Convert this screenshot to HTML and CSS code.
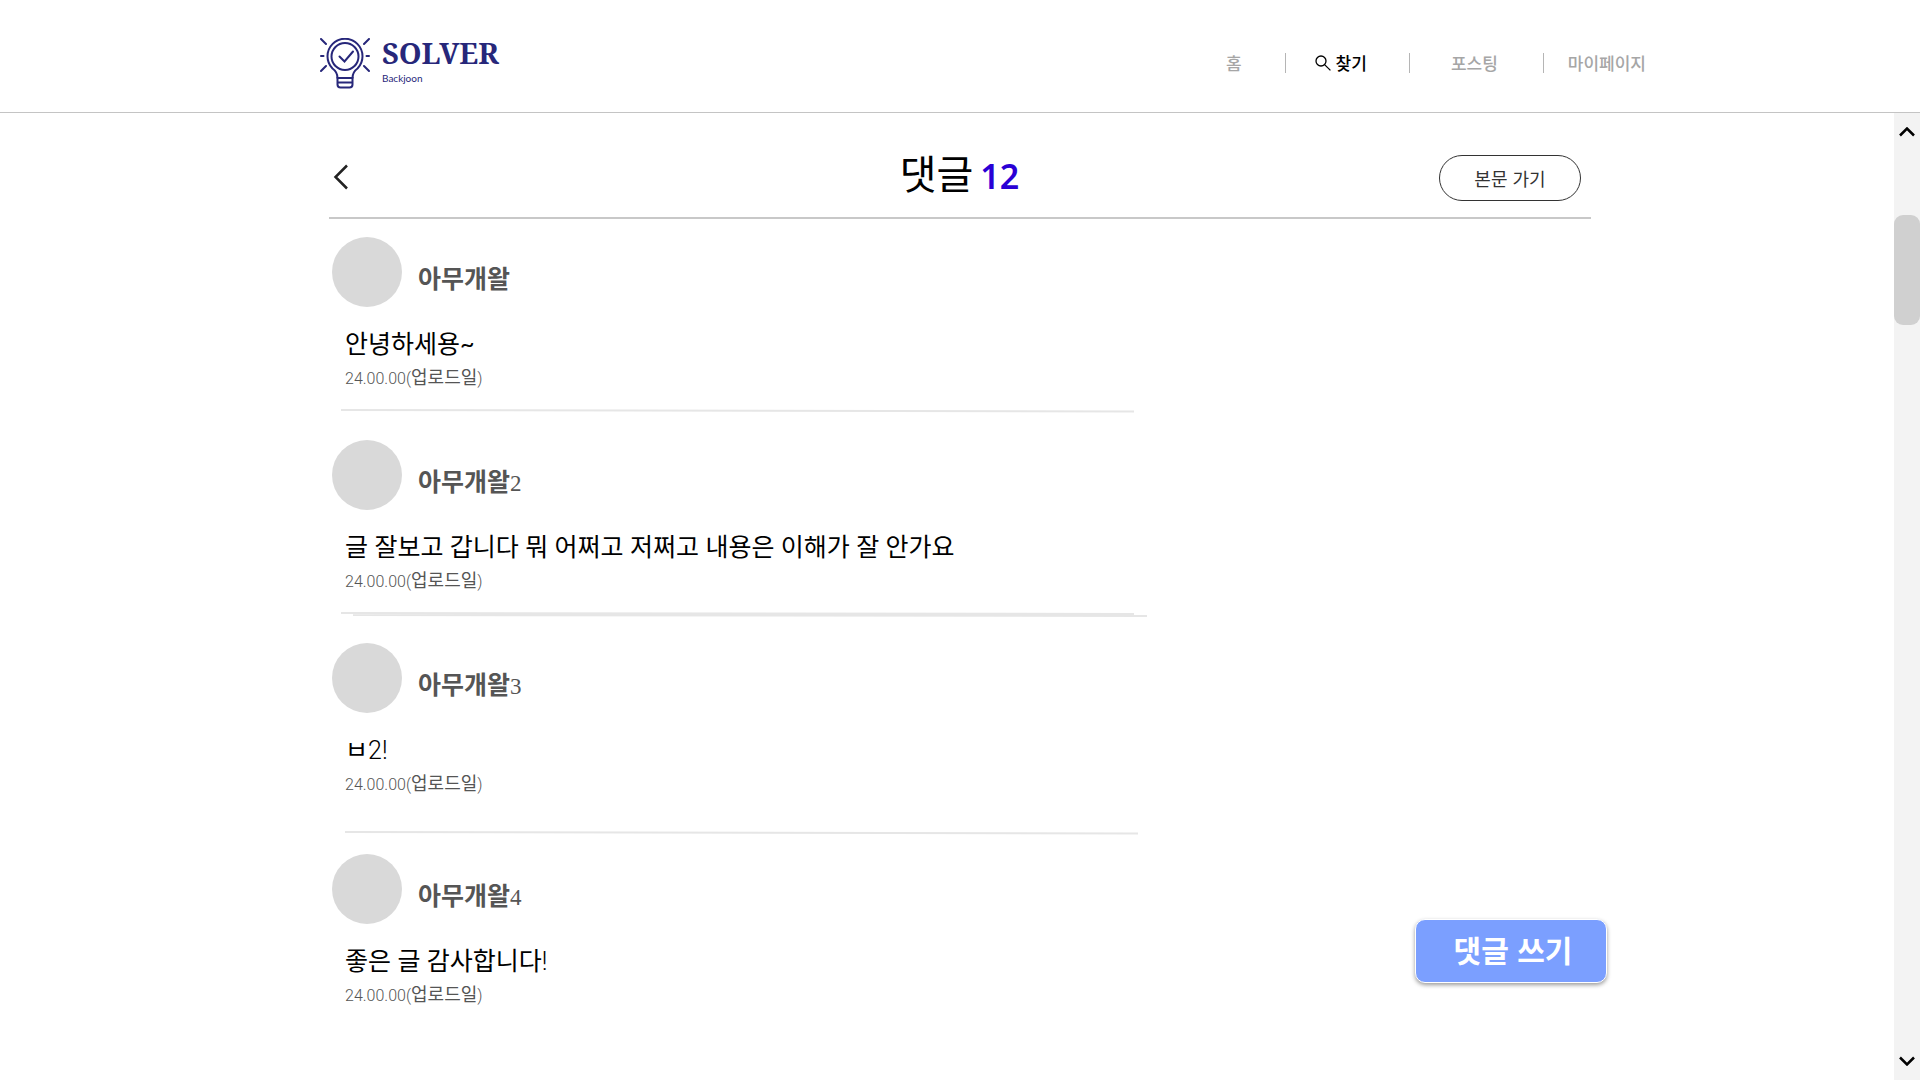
FILE: index.html
```html
<!DOCTYPE html>
<html lang="ko">
<head>
<meta charset="utf-8">
<title>SOLVER - 댓글</title>
<meta name="viewport" content="width=device-width, initial-scale=1">
<link rel="stylesheet" href="styles.css">
</head>
<body>
<header class="site-header">
  <a class="logo" href="#">
    <svg class="logo-mark" viewBox="0 0 50 52" aria-hidden="true">
      <g fill="none" stroke="currentColor" stroke-width="2" stroke-linecap="round">
        <path d="M17.500 40C17.500 35 16 33 12.500 30.500A17.500 17.500 0 1 1 37.500 30.500C34 33 32.500 35 32.500 40"/>
        <circle cx="25" cy="18.500" r="13.500"/>
        <path d="M19.500 18.500l5 5 8.500-10"/>
        <path d="M17.500 40h15v6.500a3 3 0 0 1-3 3h-9a3 3 0 0 1-3-3zM17.500 44.500h15"/>
        <path d="M1 1l5 5M49 1l-5 5M1 33l5-5M49 33l-5-5M1 18h2.500M49 18h-2.500"/>
      </g>
    </svg>
    <span class="logo-text"><span class="logo-name">SOLVER</span><span class="logo-sub">Backjoon</span></span>
  </a>
  <nav class="site-nav">
    <a class="nav-home" href="#">홈</a>
    <a class="nav-find" href="#" aria-current="page">
      <svg class="search-icon" viewBox="0 0 16 16" aria-hidden="true"><g fill="none" stroke="currentColor" stroke-width="1.300"><circle cx="6" cy="6" r="5"/><path d="M9.600 9.600L15.400 15.400"/></g></svg>찾기</a>
    <a class="nav-post" href="#">포스팅</a>
    <a class="nav-my" href="#">마이페이지</a>
  </nav>
</header>
<div class="page">
  <main class="content">
    <div class="title-bar">
      <button class="back" type="button" aria-label="뒤로"><svg viewBox="0 0 16 26" width="16" height="26" aria-hidden="true"><path d="M14 1.500L2.500 13 14 24.500" fill="none" stroke="currentColor" stroke-width="2.500"/></svg></button>
      <h1 class="title">댓글 <span class="count">12</span></h1>
      <button class="go-post" type="button">본문 가기</button>
    </div>
    <div class="board">
      <div class="comments">
        <article class="comment">
          <div class="author"><span class="avatar"></span><h2 class="name">아무개왈</h2></div>
          <p class="message">안녕하세용~</p>
          <p class="date"><span class="digits">24.00.00(</span>업로드일<span class="digits">)</span></p>
          <svg class="divider" viewBox="0 0 793 4" preserveAspectRatio="none" aria-hidden="true"><path d="M0 1L793 2.500"/></svg>
        </article>
        <article class="comment">
          <div class="author"><span class="avatar"></span><h2 class="name">아무개왈<span class="num">2</span></h2></div>
          <p class="message">글 잘보고 갑니다 뭐 어쩌고 저쩌고 내용은 이해가 잘 안가요</p>
          <p class="date"><span class="digits">24.00.00(</span>업로드일<span class="digits">)</span></p>
          <svg class="divider divider-double" viewBox="0 0 806 6" preserveAspectRatio="none" aria-hidden="true"><path d="M0 1L793 2M12 3L806 4"/></svg>
        </article>
        <article class="comment comment-spaced">
          <div class="author"><span class="avatar"></span><h2 class="name">아무개왈<span class="num">3</span></h2></div>
          <p class="message">ㅂ<span class="latin">2!</span></p>
          <p class="date"><span class="digits">24.00.00(</span>업로드일<span class="digits">)</span></p>
          <svg class="divider" viewBox="0 0 793 4" preserveAspectRatio="none" aria-hidden="true"><path d="M0 1L793 2.500"/></svg>
        </article>
        <article class="comment">
          <div class="author"><span class="avatar"></span><h2 class="name">아무개왈<span class="num">4</span></h2></div>
          <p class="message">좋은 글 감사합니다<span class="latin">!</span></p>
          <p class="date"><span class="digits">24.00.00(</span>업로드일<span class="digits">)</span></p>
        </article>
      </div>
      <button class="write" type="button">댓글 쓰기</button>
    </div>
  </main>
  <div class="scroll-track">
    <button class="scroll-arrow" type="button" aria-label="위로"><svg viewBox="0 0 16 10" width="16" height="10" aria-hidden="true"><path d="M1 8.500l7-7 7 7" fill="none" stroke="currentColor" stroke-width="2.500"/></svg></button>
    <div class="scroll-lane"><div class="scroll-thumb"></div></div>
    <button class="scroll-arrow" type="button" aria-label="아래로"><svg viewBox="0 0 16 10" width="16" height="10" aria-hidden="true"><path d="M1 1.500l7 7 7-7" fill="none" stroke="currentColor" stroke-width="2.500"/></svg></button>
  </div>
</div>
</body>
</html>
```
FILE: styles.css
```css
* { box-sizing: border-box; }

body {
  display: flex;
  flex-direction: column;
  min-height: 100vh;
  margin: 0;
  background: #fff;
  color: #000;
  font-family: "Noto Sans CJK KR", sans-serif;
}

a { color: inherit; text-decoration: none; }

button {
  padding: 0;
  border: 0;
  background: none;
  color: inherit;
  font: inherit;
  cursor: pointer;
}

svg { display: block; }
h1, h2, p { margin: 0; }

.site-header {
  display: flex;
  justify-content: space-between;
  align-items: center;
  height: 113px;
  padding: 16px 274px 0 320px;
  border-bottom: 1px solid #c4c4c4;
}

.logo { display: flex; gap: 12px; color: #27277a; }
.logo-mark { width: 50px; height: 52px; }
.logo-text { display: flex; flex-direction: column; }

.logo-name {
  font: bold 29px/30px "Noto Serif", "Liberation Serif", serif;
}

.logo-sub {
  font: 10px/20px Lato, sans-serif;
}

.site-nav {
  display: flex;
  align-items: center;
  padding-bottom: 2px;
  color: #a6a6a6;
  font-size: 17px;
  font-weight: 500;
  line-height: 20px;
}

.site-nav a { display: flex; align-items: center; }
.site-nav a + a { border-left: 1px solid #b5b5b5; }
.nav-home { padding-right: 43px; }
.site-nav .nav-find { gap: 5px; padding: 0 42px 0 29px; color: #000; }
.nav-post { padding: 0 45px 0 41px; }
.nav-my { padding-left: 24px; }
.search-icon { width: 16px; height: 16px; }

.page {
  display: grid;
  flex: 1;
  grid-template-columns: 26px minmax(0, 1fr) 26px;
}

.content {
  display: flex;
  grid-column: 2;
  flex-direction: column;
  width: 100%;
  max-width: 1262px;
  margin: 0 auto;
}

.title-bar {
  display: grid;
  grid-template-columns: 1fr auto 1fr;
  align-items: center;
  padding: 42px 10px 16px 4px;
  border-bottom: 2px solid #c8c8c8;
}

.back {
  justify-self: start;
  padding-bottom: 2px;
  color: #222;
}

.title {
  display: flex;
  align-items: baseline;
  gap: 7px;
  height: 46px;
  padding-left: 5px;
  font-size: 40px;
  font-weight: 400;
  line-height: 34px;
}

.count {
  color: #2a00d5;
  font-family: "Noto Sans", sans-serif;
  font-size: 34px;
  font-weight: 600;
}

.go-post {
  justify-self: end;
  width: 142px;
  height: 46px;
  border: 1px solid #333;
  border-radius: 23px;
  color: #333;
  font-size: 18px;
}

.board {
  display: flex;
  flex: 1;
  justify-content: space-between;
  padding-top: 18px;
}

.comment { padding-bottom: 27px; }

.author {
  display: flex;
  align-items: center;
  gap: 16px;
  padding-left: 3px;
}

.avatar {
  width: 70px;
  height: 70px;
  border-radius: 50%;
  background: #d9d9d9;
}

.name {
  padding-top: 10px;
  color: #555;
  font-size: 25px;
  font-weight: 700;
  line-height: 36px;
}

.num {
  font-family: "Liberation Serif", serif;
  font-size: 23px;
  font-weight: 400;
  line-height: 1;
}

.message {
  margin-top: 18px;
  padding-left: 16px;
  font-family: Lato, "Noto Sans CJK KR", sans-serif;
  font-size: 25px;
  line-height: 36px;
}

.latin {
  font-family: Roboto, sans-serif;
  font-weight: 300;
  line-height: 1;
}

.date {
  margin-top: 2px;
  padding-left: 16px;
  color: #555;
  font-size: 18px;
  line-height: 26px;
}

.digits {
  font-family: Roboto, sans-serif;
  font-size: 16px;
  font-weight: 300;
  line-height: 1;
}

.divider {
  width: 793px;
  max-width: 100%;
  height: 4px;
  margin: 20px 0 0 12px;
  fill: none;
  stroke: #e6e6e6;
  stroke-width: 2;
}

.divider-double { width: 806px; height: 6px; }
.comment:has(.divider-double) { padding-bottom: 25px; }
.comment-spaced { padding-bottom: 19px; }
.comment-spaced .divider { margin: 36px 0 0 16px; }

.write {
  position: sticky;
  bottom: 97px;
  align-self: flex-end;
  width: 192px;
  height: 64px;
  margin: 0 -16px 97px 0;
  padding: 0 0 4px 4px;
  border: 1px solid #fff;
  border-radius: 10px;
  background: #7b9fff;
  box-shadow: 0 2px 4px rgba(0, 0, 0, 0.4);
  color: #fff;
  font-size: 30px;
  font-weight: 700;
}

.scroll-track {
  display: flex;
  flex-direction: column;
  background: #f3f3f3;
}

.scroll-arrow {
  display: flex;
  justify-content: center;
  align-items: center;
  height: 38px;
}

.scroll-lane { flex: 1; padding-top: 64px; }

.scroll-thumb {
  height: 110px;
  border-radius: 9px;
  background: #d0d0d0;
}
```
